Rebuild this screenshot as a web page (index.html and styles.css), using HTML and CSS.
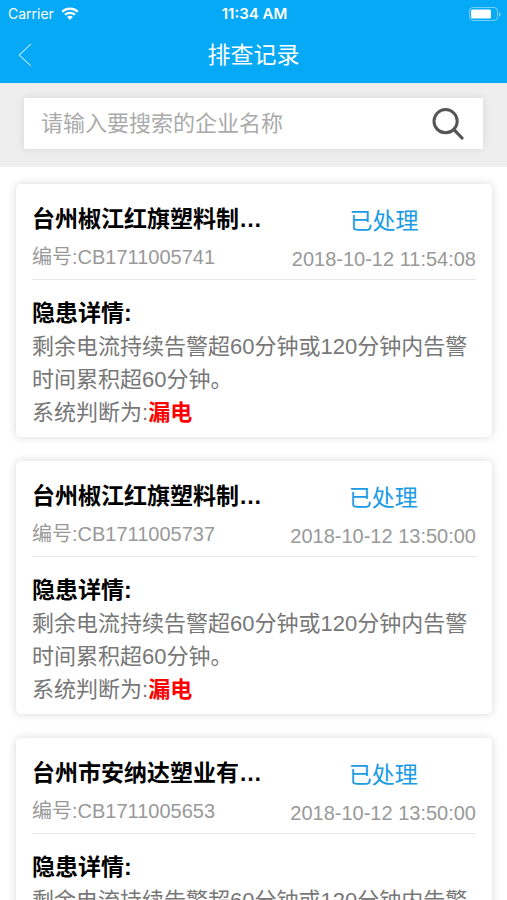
FILE: index.html
```html
<!DOCTYPE html>
<html lang="zh-CN">
<head>
    <meta charset="UTF-8">
    <meta name="viewport" content="width=device-width, initial-scale=1.0">
    <title>排查记录</title>
    <link rel="stylesheet" href="styles.css">
</head>
<body>
<div class="app">
    <header class="header">
        <div class="status-bar">
            <div class="carrier">
                <span>Carrier</span>
                <svg class="wifi" viewBox="0 0 18 13" width="18" height="13">
                    <path d="M1.2 4.8a11.2 11.2 0 0 1 15.6 0" fill="none" stroke="#fff" stroke-width="2.2"/>
                    <path d="M4 7.8a7.2 7.2 0 0 1 10 0" fill="none" stroke="#fff" stroke-width="2.2"/>
                    <path d="M9 13 6.2 10.1a4 4 0 0 1 5.6 0z" fill="#fff"/>
                </svg>
            </div>
            <span class="clock">11:34 AM</span>
            <svg class="battery" viewBox="0 0 32 14" width="32" height="14">
                <rect x="0.5" y="0.5" width="28" height="13" rx="3.5" fill="none" stroke="#fff" stroke-opacity="0.45"/>
                <rect x="2" y="2.5" width="20" height="9" rx="1.5" fill="#fff"/>
                <path d="M30 5v4.5q1.6-.6 1.6-2.2T30 5z" fill="#fff" fill-opacity="0.5"/>
            </svg>
        </div>
        <nav class="nav-bar">
            <a class="back" href="#" aria-label="返回">
                <svg viewBox="0 0 14 24" width="14" height="24">
                    <path d="M13 1 1.2 12 13 23" fill="none" stroke="#fff" stroke-width="1"/>
                </svg>
            </a>
            <h1>排查记录</h1>
        </nav>
    </header>

    <form class="search">
        <div class="search-box">
            <input type="text" placeholder="请输入要搜索的企业名称" aria-label="企业名称">
            <button type="button" class="search-button" aria-label="搜索">
                <svg viewBox="0 0 32 32" width="32" height="32">
                    <circle cx="13.6" cy="13.2" r="11.6" fill="none" stroke="#555" stroke-width="3"/>
                    <path d="M22 21.6 30 30" stroke="#555" stroke-width="3.2" stroke-linecap="round"/>
                </svg>
            </button>
        </div>
    </form>

    <main class="list">
        <article class="card">
            <div class="card-head">
                <div class="company">
                    <h2>台州椒江红旗塑料制…</h2>
                    <p class="number">编号:CB1711005741</p>
                </div>
                <div class="state">
                    <p class="state-name">已处理</p>
                    <time>2018-10-12 11:54:08</time>
                </div>
            </div>
            <div class="card-body">
                <h3>隐患详情:</h3>
                <p>剩余电流持续告警超60分钟或120分钟内告警时间累积超60分钟。</p>
                <p>系统判断为:<strong>漏电</strong></p>
            </div>
        </article>

        <article class="card">
            <div class="card-head">
                <div class="company">
                    <h2>台州椒江红旗塑料制…</h2>
                    <p class="number">编号:CB1711005737</p>
                </div>
                <div class="state">
                    <p class="state-name">已处理</p>
                    <time>2018-10-12 13:50:00</time>
                </div>
            </div>
            <div class="card-body">
                <h3>隐患详情:</h3>
                <p>剩余电流持续告警超60分钟或120分钟内告警时间累积超60分钟。</p>
                <p>系统判断为:<strong>漏电</strong></p>
            </div>
        </article>

        <article class="card">
            <div class="card-head">
                <div class="company">
                    <h2>台州市安纳达塑业有…</h2>
                    <p class="number">编号:CB1711005653</p>
                </div>
                <div class="state">
                    <p class="state-name">已处理</p>
                    <time>2018-10-12 13:50:00</time>
                </div>
            </div>
            <div class="card-body">
                <h3>隐患详情:</h3>
                <p>剩余电流持续告警超60分钟或120分钟内告警时间累积超60分钟。</p>
                <p>系统判断为:<strong>漏电</strong></p>
            </div>
        </article>
    </main>
</div>
</body>
</html>
```
FILE: styles.css
```css
:root {
    --blue: #05a9f5;
    --link-blue: #1a9be6;
    --text: #000;
    --text-body: #777;
    --text-light: #999;
    --line: #e8e8e8;
}

* {
    box-sizing: border-box;
}

body {
    margin: 0;
    font-family: "Liberation Sans", "Noto Sans CJK SC", sans-serif;
    background-color: #fff;
    color: var(--text);
}

h1, h2, h3, p {
    margin: 0;
}

.app {
    display: flex;
    flex-direction: column;
    height: 100vh;
}

/* header */
.header {
    flex: none;
    background-color: var(--blue);
    color: #fff;
}

.status-bar {
    display: grid;
    grid-template-columns: 1fr auto 1fr;
    align-items: center;
    height: 27px;
    padding: 0 6px 0 8px;
    font-family: Inter, sans-serif;
    font-size: 14px;
}

.carrier {
    display: flex;
    align-items: center;
    gap: 7px;
}

.clock {
    font-size: 15px;
    font-weight: 600;
}

.battery {
    justify-self: end;
}

.nav-bar {
    display: grid;
    grid-template-columns: 1fr auto 1fr;
    align-items: center;
    height: 56px;
    padding: 0 18px;
}

.back {
    display: flex;
}

.nav-bar h1 {
    font-size: 23px;
    font-weight: 400;
    line-height: 34px;
}

/* search */
.search {
    flex: none;
    padding: 15px 24px 18px;
    background-color: #eee;
}

.search-box {
    display: flex;
    align-items: center;
    height: 51px;
    padding: 0 19px 0 17px;
    background-color: #fff;
    box-shadow: 0 0 8px rgba(0, 0, 0, 0.1);
}

.search-box input {
    flex: 1;
    min-width: 0;
    padding: 0;
    border: none;
    outline: none;
    background: none;
    font-family: inherit;
    font-size: 22px;
    color: var(--text-body);
}

.search-box input::placeholder {
    color: #aaa;
    opacity: 1;
}

.search-button {
    display: flex;
    padding: 0;
    border: none;
    background: none;
    cursor: pointer;
}

/* records */
.list {
    flex: 1;
    min-height: 0;
    display: flex;
    flex-direction: column;
    gap: 24px;
    padding: 17px 15px 24px 16px;
    overflow-y: auto;
    scrollbar-width: none;
}

.card {
    flex: none;
    padding: 16px 16px 8px;
    border-radius: 5px;
    background-color: #fff;
    box-shadow: 0 0 8px rgba(0, 0, 0, 0.16);
}

.card-head {
    display: flex;
    justify-content: space-between;
    padding-bottom: 1px;
    border-bottom: 1px solid var(--line);
}

.company h2 {
    font-size: 23px;
    line-height: 38px;
}

.number {
    font-size: 20px;
    line-height: 38px;
    color: var(--text-light);
}

.state {
    padding-top: 2px;
    text-align: center;
}

.state-name {
    font-size: 23px;
    line-height: 38px;
    color: var(--link-blue);
}

.state time {
    display: block;
    font-size: 20px;
    line-height: 38px;
    color: var(--text-light);
}

.card-body {
    padding-top: 16px;
    font-size: 22px;
    line-height: 33px;
    color: var(--text-body);
}

.card-body h3 {
    font-size: 23px;
    line-height: 34px;
    color: var(--text);
}

.card-body strong {
    color: #f00;
}
```
